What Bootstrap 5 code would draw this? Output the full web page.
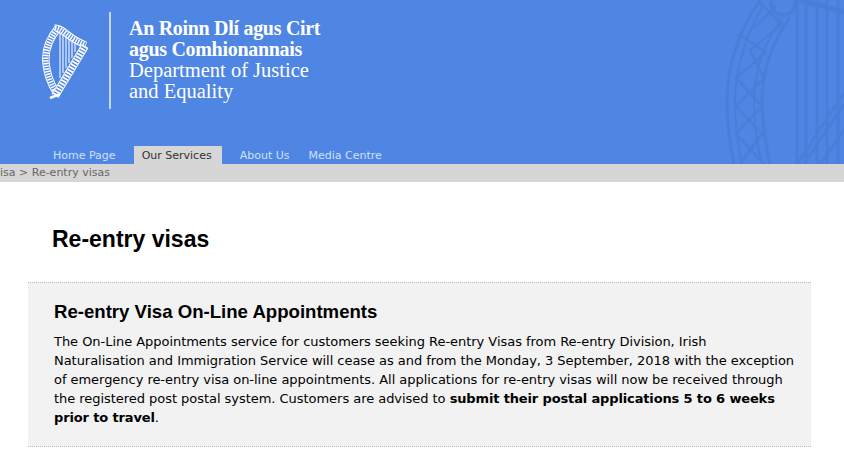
<!DOCTYPE html>
<html lang="en">

<head>
    <meta charset="UTF-8">
    <meta name="viewport" content="width=device-width, initial-scale=1.0">
    <title>Re-entry visas</title>
    <link href="https://cdn.jsdelivr.net/npm/bootstrap@5.3.3/dist/css/bootstrap.min.css" rel="stylesheet">
    <style>
        body {
            font-family: "DejaVu Sans", Verdana, sans-serif;
            font-size: 13px;
            color: #000;
            background: #fff;
            overflow: hidden;
        }

        .site-head {
            height: 164px;
            background: #4f86e3;
            overflow: hidden;
            position: relative;
        }

        .head-mark {
            position: absolute;
            left: 700px;
            top: 0;
        }

        .logo-row {
            height: 146px;
            padding-left: 41px;
            padding-top: 12px;
        }

        .logo-rule {
            width: 2px;
            height: 97px;
            background: #c5d7f5;
            margin-left: 18px;
            margin-right: 18px;
        }

        .logo-text {
            font-family: "Liberation Serif", serif;
            font-size: 20.5px;
            line-height: 21px;
            color: #fff;
            padding-top: 6px;
        }

        .logo-text b {
            display: block;
            font-size: 20px;
            letter-spacing: -0.3px;
        }

        .tab-row {
            padding-left: 45px;
            height: 18px;
        }

        .tab-link {
            font-size: 11px;
            line-height: 18px;
            padding: 1px 8px 0;
            height: 18px;
            color: #cfe0fb;
            text-decoration: none;
        }

        .tab-home {
            margin-right: 10px;
        }

        .tab-link.current {
            background: #d6d6d6;
            color: #333;
            padding-right: 10px;
            margin-right: 10px;
        }

        .tab-about {
            margin-right: 3px;
        }

        .crumb-bar {
            height: 18px;
            line-height: 18px;
            background: #d6d6d6;
            color: #666;
            font-size: 11px;
        }

        .page-title {
            font-family: "Liberation Sans", Arial, sans-serif;
            font-weight: 700;
            font-size: 23px;
            margin: 0;
            padding: 44px 0 0 52px;
            height: 100px;
        }

        .notice-box {
            margin: 0 33px 0 28px;
            padding: 17px 14px 19px 26px;
            background: #f2f2f2;
            border-top: 1px dotted #bbb;
            border-bottom: 1px dotted #bbb;
        }

        .notice-box h2 {
            font-family: "Liberation Sans", Arial, sans-serif;
            font-weight: 700;
            font-size: 18.6px;
            line-height: 23px;
            margin: 0 0 9px;
        }

        .notice-box p {
            line-height: 19px;
            letter-spacing: -0.04px;
            margin: 0;
        }

        .notice-box b {
            letter-spacing: -0.14px;
        }
    </style>
</head>

<body>
    <!-- Header -->
    <header class="site-head">
        <!-- faint harp behind the right side of the header -->
        <svg class="head-mark" width="144" height="164" viewBox="0 0 144 164" fill="none" stroke="#4a7edb" aria-hidden="true">
            <path d="M60 0C38 32 27 68 27 100C27 125 30 146 34 164" stroke-width="3"/>
            <path d="M90 17C72 42 62 72 62 100C62 125 66 146 70 164" stroke-width="3"/>
            <path d="M64 4C46 34 36 68 35 100C35 125 38 146 42 164M82 18C64 44 54 72 54 100C54 125 57 146 62 164" stroke-width="2"/>
            <path d="M60 3L82 24L50 50L64 78L36 106L62 134L40 164M38 34L66 52L36 78L62 106L36 134L64 164M76 6L54 28" stroke-width="2.5"/>
            <circle cx="83" cy="3" r="12" stroke-width="3"/>
            <path d="M97 0V164M106 0V164M117 0V164M127 0V164M138 0V164" stroke-width="3"/>
            <path d="M97 164L144 93M120 164L144 130M104 164L144 104" stroke-width="3"/>
            <path d="M100 0L144 12" stroke-width="5"/>
        </svg>
        <div class="logo-row d-flex">
            <!-- harp logo -->
            <svg width="50" height="97" viewBox="41 12 50 97" fill="none" aria-hidden="true">
                <path d="M60 33V78M63 35V73M66 37V68M69 38V63M72 40V58M75 41V52" stroke="#c9dcfa" stroke-width="1.5"/>
                <path d="M58 28C48 40 45 52 46 63C47 74 51 84 56 92" stroke="#fff" stroke-width="7.5"/>
                <path d="M58 28C48 40 45 52 46 63C47 74 51 84 56 92" stroke="#4f86e3" stroke-width="5.5"/>
                <path d="M58 28C48 40 45 52 46 63C47 74 51 84 56 92" stroke="#fff" stroke-width="5.5" stroke-dasharray="1.5 1.2"/>
                <path d="M55 28C62 27 70 40 86 45" stroke="#fff" stroke-width="7"/>
                <path d="M55 28C62 27 70 40 86 45" stroke="#4f86e3" stroke-width="5"/>
                <path d="M55 28C62 27 70 40 86 45" stroke="#fff" stroke-width="5" stroke-dasharray="1.5 1.2"/>
                <path d="M85 46L55 96" stroke="#fff" stroke-width="8"/>
                <path d="M85 46L55 96" stroke="#4f86e3" stroke-width="6"/>
                <path d="M85 46L55 96" stroke="#fff" stroke-width="6" stroke-dasharray="1.8 1.3"/>
                <path d="M50 98L60 94" stroke="#fff" stroke-width="2.5"/>
            </svg>
            <div class="logo-rule"></div>
            <div class="logo-text">
                <b>An Roinn Dlí agus Cirt</b>
                <b>agus Comhionannais</b>
                Department of Justice<br>
                and Equality
            </div>
        </div>
        <nav class="tab-row d-flex">
            <a class="tab-link tab-home" href="#">Home Page</a>
            <a class="tab-link current" href="#">Our Services</a>
            <a class="tab-link tab-about" href="#">About Us</a>
            <a class="tab-link" href="#">Media Centre</a>
        </nav>
    </header>

    <!-- Breadcrumb -->
    <div class="crumb-bar">isa &gt; Re-entry visas</div>

    <!-- Content -->
    <main>
        <h1 class="page-title">Re-entry visas</h1>
        <section class="notice-box">
            <h2>Re-entry Visa On-Line Appointments</h2>
            <p>The On-Line Appointments service for customers seeking Re-entry Visas from Re-entry Division, Irish Naturalisation and Immigration Service will cease as and from the Monday, 3 September, 2018 with the exception of emergency re-entry visa on-line appointments. All applications for re-entry visas will now be received through the registered post postal system. Customers are advised to <b>submit their postal applications 5 to 6 weeks prior to travel</b>.</p>
        </section>
    </main>

    <script src="https://cdn.jsdelivr.net/npm/bootstrap@5.3.3/dist/js/bootstrap.bundle.min.js"></script>
</body>

</html>
